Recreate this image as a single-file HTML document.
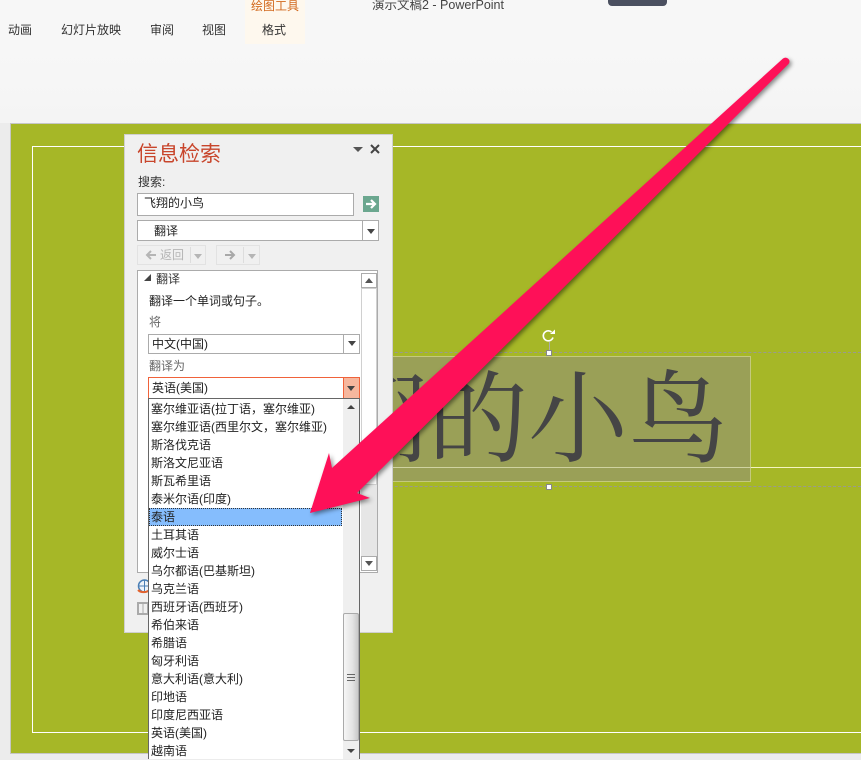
<!DOCTYPE html>
<html><head><meta charset="utf-8">
<style>
html,body{margin:0;padding:0}
body{width:861px;height:759px;overflow:hidden;position:relative;background:#ececec;font-family:"Liberation Sans","Noto Sans CJK SC",sans-serif;font-size:12px;color:#333}
.a{position:absolute;white-space:nowrap}
.t{line-height:16px}
.box{position:absolute;box-sizing:border-box;background:#fff;border:1px solid #ababab}
.tri{position:absolute;width:0;height:0;border-left:4px solid transparent;border-right:4px solid transparent;border-top:5px solid #444}
.triu{position:absolute;width:0;height:0;border-left:4px solid transparent;border-right:4px solid transparent;border-bottom:5px solid #444}
#rows div{height:18px;line-height:18px;padding-left:2px;color:#222}
</style></head><body>
<div class="a" style="left:0;top:0;width:861px;height:123px;background:linear-gradient(#f7f7f7 0,#f7f7f7 52px,#f4f4f4 123px)"></div>
<div class="a" style="left:245px;top:0;width:60px;height:44px;background:#fef8ee"></div>
<div class="a t" style="left:8px;top:22px">动画</div>
<div class="a t" style="left:61px;top:22px">幻灯片放映</div>
<div class="a t" style="left:150px;top:22px">审阅</div>
<div class="a t" style="left:202px;top:22px">视图</div>
<div class="a t" style="left:262px;top:22px">格式</div>
<div class="a t" style="left:251px;top:-2px;color:#d2691e">绘图工具</div>
<div class="a t" style="left:372px;top:-3px;font-size:12.5px;color:#444">演示文稿2 - PowerPoint</div>
<div class="a" style="left:608px;top:0;width:59px;height:6px;background:#4b5060;border-radius:0 0 4px 4px"></div>

<!-- slide -->
<div class="a" style="left:10px;top:123px;width:851px;height:631px;box-sizing:border-box;background:#a6b727;border:1px solid #c6c6c6;border-right:0"></div>
<div class="a" style="left:32px;top:146px;width:840px;height:587px;box-sizing:border-box;border:1px solid #fff"></div>
<div class="a" style="left:300px;top:467px;width:561px;height:1px;background:#f4f5c0"></div>
<div class="a" style="left:300px;top:352px;width:561px;border-top:1px dashed #9a9a90"></div>
<div class="a" style="left:300px;top:486px;width:561px;border-top:1px dashed #9a9a90"></div>
<div class="a" style="left:300px;top:356px;width:451px;height:126px;box-sizing:border-box;background:#9aa057;border:1px solid #c4c97e"></div>
<div class="a" style="left:300px;top:467px;width:451px;height:1px;background:#cfd3a0"></div>
<div class="a" style="left:328px;top:361px;font:100px/120px 'Liberation Serif','Noto Serif CJK SC',serif;color:#454545">翔的小鸟</div>
<div class="a" style="left:549px;top:342px;width:1px;height:10px;background:#aaa"></div>
<div class="a" style="left:546px;top:350px;width:6px;height:6px;box-sizing:border-box;background:#fff;border:1px solid #888"></div>
<div class="a" style="left:546px;top:484px;width:6px;height:6px;box-sizing:border-box;background:#fff;border:1px solid #888"></div>
<svg class="a" style="left:541px;top:329px" width="16" height="14" viewBox="0 0 16 14"><path d="M12 8.500A5 5 0 1 1 10.500 3" fill="none" stroke="#fff" stroke-width="1.600"/><path d="M9 5h5V0.500z" fill="#fff"/></svg>

<!-- panel -->
<div class="a" style="left:124px;top:134px;width:269px;height:499px;box-sizing:border-box;background:#f0f0f0;border:1px solid #cfcfcf"></div>
<div class="a" style="left:137px;top:141px;font-size:21px;line-height:28px;color:#c8452b">信息检索</div>
<div class="tri" style="left:353px;top:147px;border-left-width:5px;border-right-width:5px;border-top-width:5px;border-top-color:#555"></div>
<svg class="a" style="left:370px;top:144px" width="10" height="10"><path d="M1 1L9 9M9 1L1 9" stroke="#444" stroke-width="2"/></svg>
<div class="a t" style="left:138px;top:174px">搜索:</div>
<div class="box" style="left:137px;top:193px;width:217px;height:23px"></div>
<div class="a t" style="left:144px;top:195px;color:#222">飞翔的小鸟</div>
<div class="a" style="left:363px;top:196px;width:16px;height:16px;background:#6ba78f"></div>
<svg class="a" style="left:363px;top:196px" width="16" height="16"><path d="M3 8H12M8 4L12 8L8 12" fill="none" stroke="#fff" stroke-width="2.200"/></svg>
<div class="box" style="left:137px;top:220px;width:242px;height:21px"></div>
<div class="a" style="left:362px;top:221px;width:1px;height:19px;background:#ababab"></div>
<div class="tri" style="left:367px;top:229px"></div>
<div class="a t" style="left:154px;top:223px;color:#222">翻译</div>
<div class="a" style="left:137px;top:245px;width:69px;height:20px;box-sizing:border-box;border:1px solid #e2e2e2"></div>
<div class="a" style="left:190px;top:247px;width:1px;height:16px;background:#ddd"></div>
<div class="a" style="left:216px;top:245px;width:44px;height:20px;box-sizing:border-box;border:1px solid #e2e2e2"></div>
<div class="a" style="left:243px;top:247px;width:1px;height:16px;background:#ddd"></div>
<svg class="a" style="left:145px;top:249px" width="12" height="12"><path d="M11 6H2M6 2L2 6L6 10" fill="none" stroke="#b5b5b5" stroke-width="2"/></svg>
<div class="a t" style="left:160px;top:247px;color:#b5b5b5">返回</div>
<div class="tri" style="left:194px;top:254px;border-top-color:#b5b5b5"></div>
<svg class="a" style="left:224px;top:249px" width="12" height="12"><path d="M1 6H10M6 2L10 6L6 10" fill="none" stroke="#a8a8a8" stroke-width="2"/></svg>
<div class="tri" style="left:248px;top:254px;border-top-color:#b5b5b5"></div>

<div class="box" style="left:137px;top:270px;width:241px;height:303px"></div>
<div class="a" style="left:361px;top:288px;width:16px;height:197px;background:#fff;box-sizing:border-box;border:1px solid #d0d0d0"></div>
<div class="a" style="left:361px;top:485px;width:16px;height:71px;background:#e6e6e6"></div>
<div class="a" style="left:361px;top:273px;width:16px;height:15px;box-sizing:border-box;background:#fff;border:1px solid #ababab"></div>
<div class="triu" style="left:365px;top:278px;border-bottom-color:#555"></div>
<div class="a" style="left:361px;top:556px;width:16px;height:15px;box-sizing:border-box;background:#fff;border:1px solid #ababab"></div>
<div class="tri" style="left:365px;top:561px;border-top-color:#555"></div>
<svg class="a" style="left:144px;top:274px" width="8" height="8"><path d="M0 7H7V0z" fill="#444"/></svg>
<div class="a t" style="left:156px;top:271px">翻译</div>
<div class="a t" style="left:149px;top:293px;color:#222">翻译一个单词或句子。</div>
<div class="a t" style="left:149px;top:314px;color:#666">将</div>
<div class="box" style="left:148px;top:334px;width:212px;height:20px"></div>
<div class="a" style="left:343px;top:335px;width:1px;height:18px;background:#ababab"></div>
<div class="tri" style="left:348px;top:341px"></div>
<div class="a t" style="left:152px;top:336px;color:#222">中文(中国)</div>
<div class="a t" style="left:149px;top:358px;color:#666">翻译为</div>
<div class="box" style="left:148px;top:377px;width:212px;height:22px;border-color:#f0623a"></div>
<div class="a" style="left:343px;top:378px;width:16px;height:20px;background:#f6b79e;border-left:1px solid #f0623a;box-sizing:border-box"></div>
<div class="tri" style="left:347px;top:386px"></div>
<div class="a t" style="left:152px;top:380px;color:#222">英语(美国)</div>
<svg class="a" style="left:137px;top:579px" width="16" height="16"><circle cx="7.500" cy="7" r="6" fill="#eef3f8" stroke="#4a7fb5" stroke-width="1.500"/><path d="M1.500 7H13.500M7.500 1V13" stroke="#4a7fb5"/><path d="M1 11C4 14 10 14 14 10" fill="none" stroke="#e2622d" stroke-width="2"/></svg>
<svg class="a" style="left:137px;top:600px" width="13" height="15"><rect x="1" y="3" width="10" height="11" fill="none" stroke="#aaa" stroke-width="2"/><path d="M6 3V14" stroke="#aaa"/></svg>

<!-- dropdown -->
<div class="a" style="left:148px;top:398px;width:212px;height:361px;box-sizing:border-box;background:#fff;border-left:1px solid #666;border-right:1px solid #666;border-top:1px solid #666"></div>
<div class="a" style="left:343px;top:399px;width:16px;height:360px;background:#efefef"></div>
<div class="triu" style="left:347px;top:405px;border-left-width:4px;border-right-width:4px;border-bottom-width:4px"></div>
<div class="tri" style="left:347px;top:749px;border-top-width:4px"></div>
<div class="a" style="left:343px;top:613px;width:16px;height:128px;box-sizing:border-box;border:1px solid #aaa;border-radius:2px;background:linear-gradient(90deg,#f6f6f6,#e4e4e4 60%,#c9c9c9)"></div>
<div class="a" style="left:347px;top:674px;width:8px;height:7px;border-top:1px solid #666;border-bottom:1px solid #666;box-sizing:border-box"></div>
<div class="a" style="left:347px;top:677px;width:8px;height:1px;background:#666"></div>
<div class="a" style="left:149px;top:508px;width:193px;height:18px;box-sizing:border-box;background:#85bdfd;border:1px dotted #333"></div>
<div id="rows" class="a" style="left:149px;top:400px;width:190px">
<div>塞尔维亚语(拉丁语，塞尔维亚)</div>
<div>塞尔维亚语(西里尔文，塞尔维亚)</div>
<div>斯洛伐克语</div>
<div>斯洛文尼亚语</div>
<div>斯瓦希里语</div>
<div>泰米尔语(印度)</div>
<div>泰语</div>
<div>土耳其语</div>
<div>威尔士语</div>
<div>乌尔都语(巴基斯坦)</div>
<div>乌克兰语</div>
<div>西班牙语(西班牙)</div>
<div>希伯来语</div>
<div>希腊语</div>
<div>匈牙利语</div>
<div>意大利语(意大利)</div>
<div>印地语</div>
<div>印度尼西亚语</div>
<div>英语(美国)</div>
<div>越南语</div>
</div>

<!-- arrow -->
<svg class="a" style="left:0;top:0;filter:drop-shadow(2px 2px 2px rgba(0,0,0,.45))" width="861" height="759"><path d="M783 58.500Q786 56.500 788.500 59Q790.500 61.500 788.500 64L357 493L370 498L310 513L329 453L332 468Z" fill="#fe1058"/></svg>
</body></html>
